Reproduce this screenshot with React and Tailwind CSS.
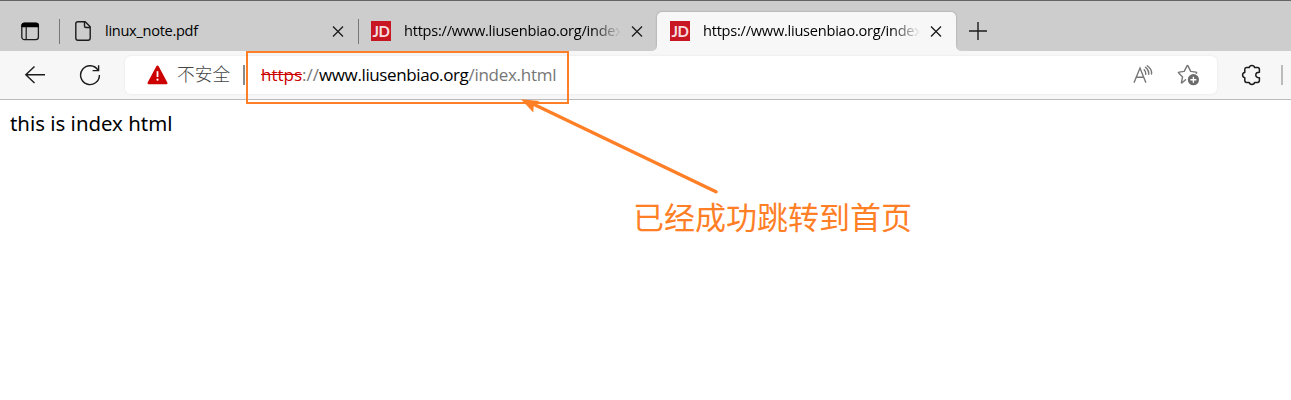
import React from "react";

function CloseIcon() {
  return (
    <svg width="12" height="12" viewBox="0 0 12 12" className="shrink-0" fill="none" stroke="#1b1b1b" strokeWidth="1.3">
      <path d="M1 1.5L11 11.5M11 1.5L1 11.5" />
    </svg>
  );
}

function JdLogo() {
  return (
    <div className="flex h-5 w-5 shrink-0 items-center justify-center bg-[#c81623] pt-px font-['Lato',sans-serif] text-[15px] leading-none font-bold tracking-[-0.4px] text-[#f6dcdf]">
      JD
    </div>
  );
}

function PageIcon() {
  return (
    <svg width="20" height="22" viewBox="0 0 20 22" className="shrink-0" fill="none" stroke="#1b1b1b" strokeWidth="1.4" strokeLinejoin="round">
      <path d="M4 1.7H11.2L16.2 6.8V18Q16.2 20.2 14 20.2H4Q1.8 20.2 1.8 18V3.8Q1.8 1.7 4 1.7Z" />
      <path d="M10.5 2V6Q10.5 7.5 12 7.5H16" />
    </svg>
  );
}

function UrlTab() {
  return (
    <>
      <JdLogo />
      <span className="ml-[13px] w-[216px] overflow-hidden pb-px text-[14.6px] tracking-[-0.25px] whitespace-nowrap [mask-image:linear-gradient(to_right,black_188px,transparent_217px)]">
        https://www.liusenbiao.org/index.html
      </span>
    </>
  );
}

function TabStrip() {
  return (
    <div className="flex h-[51px] border-t border-[#666466] bg-[#cdcdcd] pt-[10px] text-black">
      <div className="flex h-10 w-[60px] items-center justify-between pl-[21px]">
        <svg width="19" height="19" viewBox="0 0 19 19" fill="none">
          <rect x="0.8" y="1.2" width="16.6" height="16.4" rx="2.6" stroke="#1b1b1b" strokeWidth="1.3" />
          <path d="M0.4 5.2V3.6Q0.4 0.7 3.2 0.7H15Q17.9 0.7 17.9 3.6V5.2Z" fill="#000" />
          <path d="M5.2 5V17.5" stroke="#1b1b1b" strokeWidth="1.2" />
        </svg>
        <div className="h-[25px] w-px bg-[#777]" />
      </div>
      <div className="flex h-10 w-[299px] items-center pl-[14px]">
        <PageIcon />
        <span className="ml-[11px] w-[227px] pb-px text-[14.6px] tracking-[-0.3px]">linux_note.pdf</span>
        <CloseIcon />
        <div className="ml-auto h-[25px] w-px bg-[#777]" />
      </div>
      <div className="flex h-10 w-[298px] items-center pl-3">
        <UrlTab />
        <span className="ml-[11px]"><CloseIcon /></span>
      </div>
      <div className="relative mt-px flex h-[39px] w-[299px] items-center rounded-t-[5px] bg-[#f7f7f7] pb-px pl-[13px] shadow-[0_0_2px_rgba(0,0,0,0.3)]">
        <UrlTab />
        <span className="ml-[11px]"><CloseIcon /></span>
        <svg className="absolute bottom-0 -left-[6px]" width="6" height="6" viewBox="0 0 6 6"><path d="M6 0V6H0Q6 6 6 0Z" fill="#f7f7f7" /></svg>
        <svg className="absolute -right-[6px] bottom-0" width="6" height="6" viewBox="0 0 6 6"><path d="M0 0V6H6Q0 6 0 0Z" fill="#f7f7f7" /></svg>
      </div>
      <div className="flex h-[39px] items-center pl-[13px]">
        <svg width="18" height="18" viewBox="0 0 18 18" stroke="#1b1b1b" strokeWidth="1.4"><path d="M9 0V18M0 9H18" /></svg>
      </div>
    </div>
  );
}

function Toolbar() {
  return (
    <div className="relative flex h-[49px] items-center border-b border-[#bbb] bg-[#f7f7f7] pb-px">
      <svg className="ml-6" width="22" height="20" viewBox="0 0 22 20" fill="none" stroke="#1b1b1b" strokeWidth="1.4">
        <path d="M10.5 1.5L1.8 9.7L10.5 18M1.8 9.7H21" />
      </svg>
      <svg className="ml-[33px]" width="22" height="22" viewBox="0 0 22 22" fill="none" stroke="#1b1b1b" strokeWidth="1.4">
        <path d="M19 6.2A9.4 9.4 0 1 0 20.4 11" />
        <path d="M19.6 1.3V6.6H13.6" />
      </svg>
      <div className="ml-6 flex h-[38px] w-[1092px] items-center rounded-[6px] bg-white shadow-[0_0_3px_rgba(0,0,0,0.07)]">
        <svg className="ml-[22px]" width="21" height="20" viewBox="0 0 21 20">
          <path d="M10.5 1.8L19.2 18H1.8Z" fill="#c00" stroke="#c00" strokeWidth="2.6" strokeLinejoin="round" />
          <path d="M10.5 6.2V12" stroke="#fff" strokeWidth="1.8" />
          <circle cx="10.5" cy="14.7" r="1.1" fill="#fff" />
        </svg>
        <span className="ml-[9px] w-[53px] pb-[3px] font-['Noto_Sans_CJK_SC',sans-serif] text-[17.7px] leading-6 font-light whitespace-nowrap text-[#444]">不安全</span>
        <div className="ml-[13px] h-5 w-0.5 bg-[#8a8a8a]" />
        <div className="ml-4 text-[17px] whitespace-nowrap text-[#767676]">
          <span className="text-[#c00] line-through decoration-[#c00]">https</span>://<span className="tracking-[-0.38px] text-black">www.liusenbiao.org</span><span className="tracking-[-0.28px]">/index.html</span>
        </div>
        <svg className="mr-[23px] ml-auto" width="22" height="20" viewBox="0 0 22 20" fill="none" stroke="#767676" strokeWidth="1.4" strokeLinecap="round">
          <path d="M2.2 17.2L8 3L13.7 17.2M4.1 12.2H11.8" />
          <path d="M12.2 4.8Q14 6.8 13.7 9.3M13.5 2.2Q17.3 5.2 16.7 9.2M15.2 .8Q20.3 4.5 19.5 9" />
        </svg>
        <svg className="mr-[17px]" width="23" height="22" viewBox="0 0 23 22" fill="none">
          <path d="M8.5 15.8L5.1 18.8Q4.2 19.3 4.5 18.1L5.6 12.9L1.7 9.1Q.9 8.2 2.1 8.1L7.2 7.4L9.9 2.1Q10.5 1 11.1 2.1L13.7 7.4L19 8.1Q20.2 8.3 19.3 9.2" stroke="#767676" strokeWidth="1.4" strokeLinejoin="round" strokeLinecap="round" />
          <circle cx="16.4" cy="15.7" r="5.6" fill="#6b6b6b" />
          <path d="M16.4 12.7V18.7M13.4 15.7H19.4" stroke="#fff" strokeWidth="1.4" />
        </svg>
      </div>
      <svg className="ml-6" width="21" height="22" viewBox="0 0 21 22" fill="none" stroke="#1b1b1b" strokeWidth="1.5" strokeLinejoin="round">
        <path d="M5.4 3.5H8.2Q8.6 1.4 10.9 1.4T13.6 3.5H16.5Q18.4 3.5 18.4 5.4V8.2Q14.8 8.2 14.8 10.9T18.4 13.7V16.6Q18.4 18.4 16.5 18.4H13.6Q13.2 20.4 10.9 20.4T8.2 18.4H5.6Q3.8 18.4 3.8 16.6V13.7Q1.6 13.3 1.6 11T3.8 8.4V5.3Q3.8 3.5 5.4 3.5Z" />
      </svg>
      <div className="ml-[19px] h-5 w-0.5 bg-[#bbb]" />
    </div>
  );
}

export default function App() {
  return (
    <div className="relative h-[400px] w-[1291px] overflow-hidden bg-white font-['Open_Sans','Noto_Sans',sans-serif]">
      <TabStrip />
      <Toolbar />
      <main className="px-[10px] pt-[9px] font-['Noto_Sans',sans-serif] text-[20.4px] leading-7 text-black">this is index html</main>
      <div className="absolute top-[51px] left-[246px] h-[53px] w-[323px] border-2 border-[#ff7f27]" />
      <svg className="absolute top-[95px] left-[515px]" width="210" height="105" viewBox="0 0 210 105">
        <path d="M16 8L201 96.8" stroke="#ff7f27" strokeWidth="3.4" strokeLinecap="round" />
        <path d="M6 4.2L24.5 6L18.8 9.8L18.3 17.5Z" fill="#ff7f27" />
      </svg>
      <div className="absolute top-[194px] left-[633px] font-['Noto_Sans_CJK_SC',sans-serif] text-[31px] leading-[44px] whitespace-nowrap text-[#ff7f27]">已经成功跳转到首页</div>
    </div>
  );
}
